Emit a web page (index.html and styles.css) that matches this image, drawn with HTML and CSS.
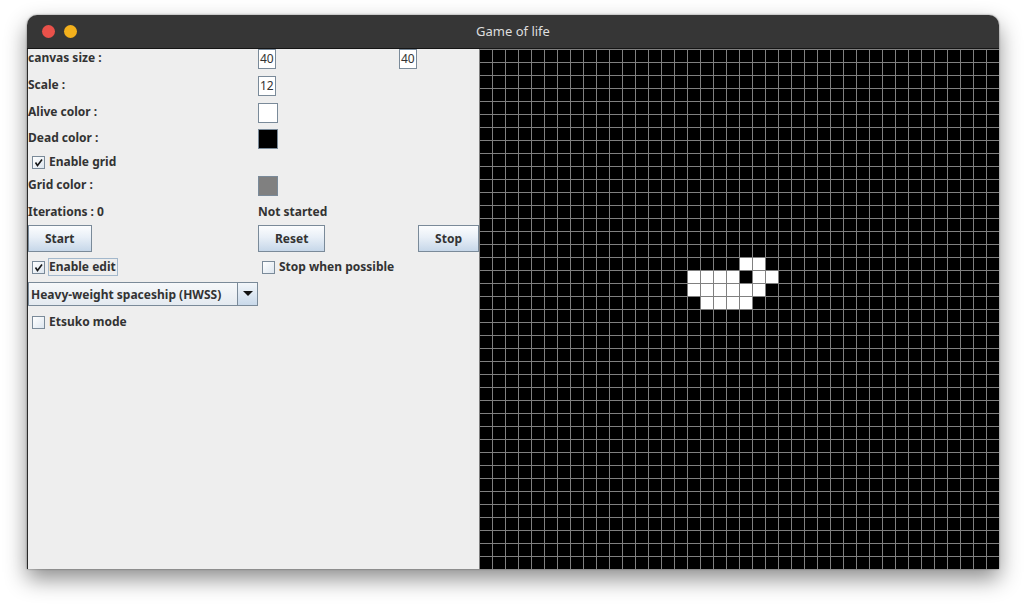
FILE: index.html
```html
<!DOCTYPE html>
<html>
<head>
<meta charset="utf-8">
<title>Game of life</title>
<link rel="stylesheet" href="styles.css">
</head>
<body>
<div class="window">
  <div class="titlebar">
    <div class="lights"><span class="light red"></span><span class="light yellow"></span></div>
    <div class="title">Game of life</div>
    <div></div>
  </div>
  <div class="content">
    <div class="panel">
      <div class="lbl">canvas size :</div>
      <div class="field">40</div>
      <div class="field">40</div>

      <div class="lbl">Scale :</div>
      <div class="field">12</div>
      <div></div>

      <div class="lbl">Alive color :</div>
      <div class="swatch alive"></div>
      <div></div>

      <div class="lbl">Dead color :</div>
      <div class="swatch dead"></div>
      <div></div>

      <div class="check"><span class="box"><svg class="tick" width="11" height="11" viewBox="0 0 11 11"><path d="M2.5 5.5 L4.5 8.5 L9 2.5" fill="none" stroke="#1a1a1a" stroke-width="1.6"/></svg></span><span class="ctext">Enable grid</span></div>
      <div></div>
      <div></div>

      <div class="lbl">Grid color :</div>
      <div class="swatch grey"></div>
      <div></div>

      <div class="lbl">Iterations : 0</div>
      <div class="lbl">Not started</div>
      <div></div>

      <div><button class="btn">Start</button></div>
      <div><button class="btn">Reset</button></div>
      <div class="end"><button class="btn">Stop</button></div>

      <div class="check"><span class="box"><svg class="tick" width="11" height="11" viewBox="0 0 11 11"><path d="M2.5 5.5 L4.5 8.5 L9 2.5" fill="none" stroke="#1a1a1a" stroke-width="1.6"/></svg></span><span class="ctext focus">Enable edit</span></div>
      <div class="check"><span class="box"></span><span class="ctext">Stop when possible</span></div>
      <div></div>

      <div class="combo"><span class="ctitle">Heavy-weight spaceship (HWSS)</span><span class="carrow"><svg width="10" height="6" viewBox="0 0 10 6"><path d="M0 0 H10 L5 5 Z" fill="#111"/></svg></span></div>
      <div></div>
      <div></div>

      <div class="check"><span class="box"></span><span class="ctext">Etsuko mode</span></div>
      <div></div>
      <div></div>
    </div>
    <div class="board">
      <div class="cell" style="grid-column:21;grid-row:17"></div>
      <div class="cell" style="grid-column:22;grid-row:17"></div>
      <div class="cell" style="grid-column:17;grid-row:18"></div>
      <div class="cell" style="grid-column:18;grid-row:18"></div>
      <div class="cell" style="grid-column:19;grid-row:18"></div>
      <div class="cell" style="grid-column:20;grid-row:18"></div>
      <div class="cell" style="grid-column:22;grid-row:18"></div>
      <div class="cell" style="grid-column:23;grid-row:18"></div>
      <div class="cell" style="grid-column:17;grid-row:19"></div>
      <div class="cell" style="grid-column:18;grid-row:19"></div>
      <div class="cell" style="grid-column:19;grid-row:19"></div>
      <div class="cell" style="grid-column:20;grid-row:19"></div>
      <div class="cell" style="grid-column:21;grid-row:19"></div>
      <div class="cell" style="grid-column:22;grid-row:19"></div>
      <div class="cell" style="grid-column:18;grid-row:20"></div>
      <div class="cell" style="grid-column:19;grid-row:20"></div>
      <div class="cell" style="grid-column:20;grid-row:20"></div>
      <div class="cell" style="grid-column:21;grid-row:20"></div>
    </div>
  </div>
</div>
</body>
</html>
```
FILE: styles.css
```css
html, body {
  margin: 0;
  padding: 0;
  background: #ffffff;
}
html {
  height: 100%;
}
body {
  min-height: 100%;
  box-sizing: border-box;
  padding: 15px 0 0 27px;
  font-family: "Noto Sans", "DejaVu Sans", sans-serif;
  overflow: hidden;
}
.window {
  width: 972px;
  height: 554px;
  border-radius: 10px 10px 0 0;
  overflow: hidden;
  box-shadow: 0 10px 22px rgba(0, 0, 0, 0.45), 0 0 2px rgba(0, 0, 0, 0.5);
  background: #eeeeee;
}
.titlebar {
  height: 33px;
  background: #363636;
  border-bottom: 1px solid #151515;
  display: grid;
  grid-template-columns: 1fr auto 1fr;
  align-items: center;
}
.lights {
  display: flex;
  gap: 9px;
  padding-left: 15px;
}
.light {
  width: 13px;
  height: 13px;
  border-radius: 50%;
  display: block;
}
.red { background: #e9514a; }
.yellow { background: #f3b01c; }
.title {
  color: #dedede;
  font-size: 13px;
  margin-top: -2px;
}
.content {
  display: flex;
  height: 520px;
  border-left: 1px solid #2a2a2a;
}
.panel {
  width: 451px;
  background: #eeeeee;
  display: grid;
  grid-template-columns: 230px 141px 80px;
  grid-template-rows: 27px 27px 26px 23px 24px 27px 22px 32px 25px 30px 18px;
  align-content: start;
  align-items: start;
  color: #333333;
  font-size: 12px;
  font-weight: bold;
}
.lbl {
  line-height: 18px;
  white-space: nowrap;
}
.field {
  width: 18px;
  height: 20px;
  box-sizing: border-box;
  border: 1px solid #7a8a99;
  background: #ffffff;
  font-weight: normal;
  font-size: 12px;
  line-height: 18px;
  padding-left: 1px;
  color: #333333;
  overflow: hidden;
}
.swatch {
  width: 20px;
  height: 20px;
  box-sizing: border-box;
  border: 1px solid #7a8a99;
}
.alive { background: #ffffff; }
.dead { background: #000000; }
.grey { background: #808080; }
.check {
  display: flex;
  align-items: center;
  height: 18px;
  padding: 1px 0 0 4px;
  white-space: nowrap;
}
.box {
  width: 13px;
  height: 13px;
  box-sizing: border-box;
  border: 1px solid #7a8a99;
  background: linear-gradient(135deg, #ffffff, #dde6ef);
  margin-right: 3px;
  display: flex;
}
.tick {
  display: block;
}
.ctext {
  border: 1px solid transparent;
  line-height: 16px;
  padding: 0 1px 0 0;
}
.ctext.focus {
  border-color: #a3b8cc;
}
.btn {
  height: 27px;
  padding: 0 16px;
  border: 1px solid #7a8a99;
  background: linear-gradient(to bottom, #fcfdfe 0%, #e8eff7 45%, #c6d7e9 100%);
  font-family: "Noto Sans", "DejaVu Sans", sans-serif;
  font-weight: bold;
  font-size: 12px;
  color: #333333;
  margin: 0;
}
.end {
  justify-self: end;
}
.combo {
  width: 230px;
  height: 24px;
  box-sizing: border-box;
  border: 1px solid #7a8a99;
  background: linear-gradient(to bottom, #f6f8fa, #e4eaf0);
  display: flex;
  align-items: center;
}
.ctitle {
  flex: 1;
  padding-left: 2px;
  white-space: nowrap;
}
.carrow {
  width: 20px;
  height: 22px;
  box-sizing: border-box;
  border-left: 1px solid #7a8a99;
  background: linear-gradient(to bottom, #f2f6fa, #c9d9ea);
  display: flex;
  align-items: center;
  justify-content: center;
}
.board {
  width: 520px;
  height: 520px;
  box-sizing: border-box;
  padding: 1px 0 0 1px;
  background-color: #000000;
  background-image: linear-gradient(to right, #808080 1px, transparent 1px), linear-gradient(to bottom, #808080 1px, transparent 1px);
  background-size: 13px 13px;
  display: grid;
  grid-template-columns: repeat(40, 12px);
  grid-template-rows: repeat(40, 12px);
  gap: 1px;
}
.cell {
  background: #ffffff;
}
```
